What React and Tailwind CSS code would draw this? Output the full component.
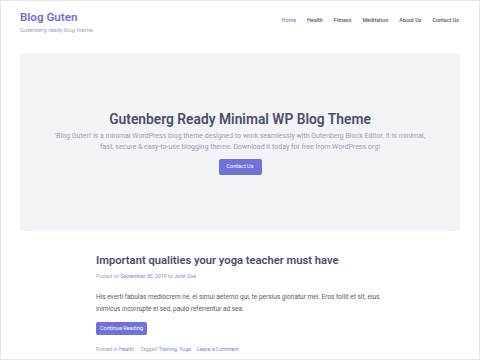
export default function App() {
  return (
    <div className="w-[480px] h-[360px] overflow-hidden bg-white border border-[#e6e6e6] font-['Roboto',sans-serif] text-[#4b4e68]">
      <header className="flex justify-between items-start pl-[19px] pr-[20px] pt-[9px] h-[52px]">
        <div>
          <div className="text-[11.6px] leading-[15px] font-semibold text-[#6c6fd6]">Blog Guten</div>
          <div className="text-[5.8px] leading-[8px] mt-[1px] text-[#a2a4b4]">Gutenberg ready blog theme</div>
        </div>
        <nav className="flex gap-[11px] pt-[6px] text-[5.4px] leading-[8px] font-medium text-[#555870]">
          <span className="text-[#7b7fe0]">Home</span>
          <span>Health</span>
          <span>Fitness</span>
          <span>Meditation</span>
          <span>About Us</span>
          <span>Contact Us</span>
        </nav>
      </header>
      <section className="mx-[19px] h-[178px] rounded-[2px] bg-[#f3f4f7] flex flex-col items-center justify-center">
        <h1 className="text-[13.8px] leading-[18px] font-semibold text-[#4a4d68]">Gutenberg Ready Minimal WP Blog Theme</h1>
        <p className="mt-[3px] w-[380px] text-center text-[7px] leading-[11px] text-[#9c9eb0]">
          'Blog Guten' is a minimal WordPress blog theme designed to work seamlessly with Gutenberg Block Editor. It is minimal, fast, secure &amp; easy-to-use blogging theme. Download it today for free from WordPress.org!
        </p>
        <button className="mt-[6px] w-[43px] h-[16px] rounded-[2px] bg-[#6f72d8] text-white text-[5.5px]">Contact Us</button>
      </section>
      <article className="ml-[95px] w-[290px] pt-[23px]">
        <h2 className="text-[11.2px] leading-[14px] font-semibold text-[#4a4d68] whitespace-nowrap">Important qualities your yoga teacher must have</h2>
        <div className="mt-[5px] text-[5.3px] leading-[7px] italic text-[#a2a4b4]">
          Posted on <span className="text-[#7b7fe0]">September 30, 2019</span> by <span className="text-[#7b7fe0]">John Doe</span>
        </div>
        <p className="mt-[11px] text-[6.5px] leading-[12px] text-[#55586f]">
          His everti fabulas mediocrem ne, ei simul aeterno qui, te persius gloriatur mel. Eros tollit et sit, eius inimicus incorrupte ei sed, paulo referrentur ad sea.
        </p>
        <button className="block mt-[7px] w-[51px] h-[13px] rounded-[2px] bg-[#6f72d8] text-white text-[5.5px]">Continue Reading</button>
        <div className="mt-[11px] flex gap-[6px] text-[5.2px] leading-[7px] text-[#a2a4b4]">
          <span>Posted in <span className="text-[#7b7fe0]">Health</span></span>
          <span>Tagged <span className="text-[#7b7fe0]">Training</span>, <span className="text-[#7b7fe0]">Yoga</span></span>
          <span className="text-[#7b7fe0]">Leave a Comment</span>
        </div>
      </article>
    </div>
  );
}
